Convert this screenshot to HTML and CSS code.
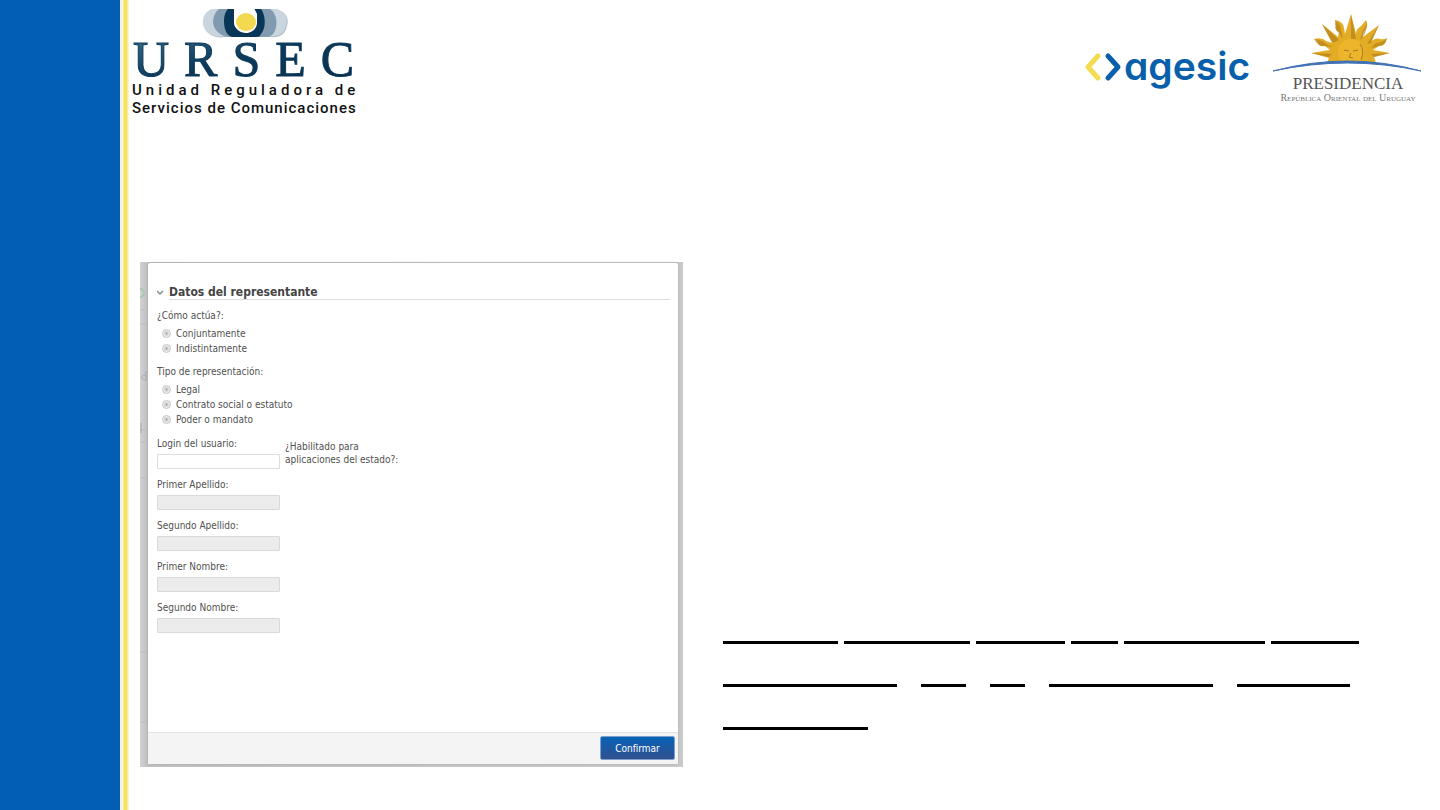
FILE: index.html
```html
<!DOCTYPE html>
<html lang="es">
<head>
<meta charset="utf-8">
<title>URSEC - Datos del representante</title>
<link rel="stylesheet" href="styles.css">
</head>
<body>
<div class="page">
  <div class="stripe"></div>
  <main class="main">
    <header class="header">
      <svg class="logo-ursec" viewBox="0 0 240 112" role="img" aria-label="URSEC">
        <defs>
          <linearGradient id="navy" x1="0" y1="0" x2="1" y2="1">
            <stop offset="0" stop-color="#3f7390"/>
            <stop offset=".45" stop-color="#0c3a5b"/>
            <stop offset="1" stop-color="#0b2b49"/>
          </linearGradient>
        </defs>
        <path d="M80 1H145C154 4 156 10 154 17C152 25 148 29 137 28H92C82 30 72 25 71 16C70 9 74 3 80 1Z" fill="#b4bec6" transform="translate(1 1)"/>
        <path d="M80 1H145C154 4 156 10 154 17C152 25 148 29 137 28H92C82 30 72 25 71 16C70 9 74 3 80 1Z" fill="#c9d6df"/>
        <path d="M87 1H138C146 6 146 20 141 26C138 29 134 29 131 29H97C88 28 82 22 81 15C81 9 83 4 87 1Z" fill="#809bb0"/>
        <path d="M96 1H129C134 8 134 20 129 26C128 28 127 29 124 29H100C94 27 92 20 92 13C92 7 94 3 96 1Z" fill="#093556"/>
        <path d="M102 0H122L125 6V15C125 20 120 25 114 25S102 20 102 15Z" fill="#fff"/>
        <ellipse cx="114" cy="14" rx="10" ry="9" fill="#f3d94f"/>
        <text class="ursec-name" x="1" y="68" fill="url(#navy)">URSEC</text>
        <text class="ursec-line wide" x="0" y="87">Unidad Reguladora de</text>
        <text class="ursec-line" x="0" y="105">Servicios de Comunicaciones</text>
      </svg>
      <div class="partners">
        <svg class="logo-agesic" viewBox="0 0 168 52" role="img" aria-label="agesic">
          <path d="M14 13L4 24L14 35" fill="none" stroke="#f3dc50" stroke-width="5" stroke-linecap="round" stroke-linejoin="round"/>
          <path d="M24 13L34 24L24 35" fill="none" stroke="#0860ab" stroke-width="5" stroke-linecap="round" stroke-linejoin="round"/>
          <text class="agesic-name" x="40" y="37">agesic</text>
        </svg>
        <svg class="logo-pres" viewBox="0 0 152 94" role="img" aria-label="Presidencia República Oriental del Uruguay">
          <path d="M55 51L57 46L39 41L58 38L53 34Q47 35 46 31Q45 28 42 27Q50 25 54 29L60 31L50 12L66 25L67 20Q62 18 64 14Q65 11 63 8Q71 9 72 16L73 22L79 2L84 22Q84 17 88 15Q91 12 94 8Q97 15 93 18Q90 21 91 25L107 13L99 30Q103 25 108 27Q112 28 115 26Q113 35 107 34L101 38L118 41L102 45L104 51Z" fill="#e3ac25"/>
          <path d="M39 41L60 42L57 45ZM42 27Q50 28 56 33L61 35L53 34Q46 35 42 27ZM50 12L67 28L61 31ZM63 8Q69 12 69 18L71 27L67 21Q62 17 63 8ZM79 2V27H84ZM94 8Q95 14 91 18L88 28L91 25Q96 18 94 8ZM107 13L95 32L99 31ZM115 26Q110 31 104 31L99 36L107 34Q113 34 115 26ZM118 41L99 42L102 45Z" fill="#a8761d" opacity=".55"/>
          <circle cx="79" cy="40" r="13" fill="#edb52b"/>
          <path d="M72 38L77 39M81 39L86 38M79 41L77 45L81 46M75 49Q79 51 83 49M88 32Q93 39 89 48" fill="none" stroke="#a87721" stroke-width="1"/>
          <path d="M52 52Q76 47 106 52L106 56H52Z" fill="#fff"/>
          <path d="M1 59Q76 39 149 59Q76 43 1 59Z" fill="#3e70b5" stroke="#3e70b5" stroke-width="1"/>
          <text class="pres-name" x="76" y="77">PRESIDENCIA</text>
          <text class="pres-sub" x="76" y="89">República Oriental del Uruguay</text>
        </svg>
      </div>
    </header>

    <div class="content">
      <section class="backdrop">
        <svg class="ghost" viewBox="0 0 8 505" aria-hidden="true">
          <circle cx="0" cy="31" r="4" fill="none" stroke="#a5c9b2" stroke-width="2"/>
          <path d="M0 48H4M0 62H7M0 168H8M0 180H7M0 216H8M0 390H8M0 460H8" stroke="#bdbdbd"/>
          <path d="M6 109V119M6 114C1 111 0 119 6 118M1 161V171" fill="none" stroke="#aaa"/>
        </svg>
        <form class="dialog">
          <div class="dialog-body">
            <div class="section-head">
              <svg class="chevron" viewBox="0 0 8 6" aria-hidden="true"><path d="M0 1L3 4L6 1" fill="none" stroke="#888" stroke-width="1.5"/></svg>
              <h1 class="section-title">Datos del representante</h1>
            </div>
            <fieldset class="group">
              <legend class="label">¿Cómo actúa?:</legend>
              <label class="option"><input class="radio" type="radio" name="actua">Conjuntamente</label>
              <label class="option"><input class="radio" type="radio" name="actua">Indistintamente</label>
            </fieldset>
            <fieldset class="group">
              <legend class="label">Tipo de representación:</legend>
              <label class="option"><input class="radio" type="radio" name="tipo">Legal</label>
              <label class="option"><input class="radio" type="radio" name="tipo">Contrato social o estatuto</label>
              <label class="option"><input class="radio" type="radio" name="tipo">Poder o mandato</label>
            </fieldset>
            <div class="login-row">
              <div class="field"><label class="label" for="login">Login del usuario:</label><input class="input" id="login" type="text"></div>
              <p class="enabled">¿Habilitado para aplicaciones del estado?:</p>
            </div>
            <div class="field"><label class="label" for="ape1">Primer Apellido:</label><input class="input" id="ape1" type="text" disabled></div>
            <div class="field"><label class="label" for="ape2">Segundo Apellido:</label><input class="input" id="ape2" type="text" disabled></div>
            <div class="field"><label class="label" for="nom1">Primer Nombre:</label><input class="input" id="nom1" type="text" disabled></div>
            <div class="field"><label class="label" for="nom2">Segundo Nombre:</label><input class="input" id="nom2" type="text" disabled></div>
          </div>
          <div class="dialog-foot"><button class="confirm" type="button">Confirmar</button></div>
        </form>
      </section>

      <section class="rules">
        <div class="rule-row">
          <span class="rule" style="width:115px"></span><span class="rule" style="width:126px"></span><span class="rule" style="width:89px"></span><span class="rule" style="width:47px"></span><span class="rule" style="width:141px"></span><span class="rule" style="width:88px"></span>
        </div>
        <div class="rule-row loose">
          <span class="rule" style="width:174px"></span><span class="rule" style="width:45px"></span><span class="rule" style="width:35px"></span><span class="rule" style="width:164px"></span><span class="rule" style="width:113px"></span>
        </div>
        <div class="rule-row">
          <span class="rule" style="width:145px"></span>
        </div>
      </section>
    </div>
  </main>
</div>
</body>
</html>
```
FILE: styles.css
```css
* { box-sizing: border-box; }

body {
  margin: 0;
  background: #fff;
  color: #505050;
  font: 10px/15px "DejaVu Sans Condensed", "DejaVu Sans", sans-serif;
}

.page { display: flex; min-height: 100vh; }

.stripe {
  flex: none;
  width: 129px;
  background: linear-gradient(to right, #025db5 120px, #f2f2e4 120px, #f8f6dc 123px, #f6e35f 124px, #f6e35f 127px, #fbf5c8 128px);
}

.main { flex: 1; min-width: 0; }

.header {
  display: flex;
  justify-content: space-between;
  align-items: flex-start;
  padding: 8px 16px 142px 3px;
}

.logo-ursec { width: 240px; height: 112px; }
.ursec-name { font: 50px "Liberation Serif", serif; letter-spacing: 15px; stroke: #0c3a5b; stroke-width: 1px; }
.ursec-line { font: 500 15px Roboto, sans-serif; letter-spacing: 1px; fill: #111; }
.ursec-line.wide { letter-spacing: 4px; }

.partners { display: flex; align-items: center; gap: 20px; padding-top: 4px; }
.logo-agesic { width: 168px; height: 52px; margin-top: 20px; overflow: visible; }
.agesic-name { font: 600 39px Inter, sans-serif; font-feature-settings: "cv11"; fill: #0860ab; }
.logo-pres { width: 152px; height: 94px; }
.pres-name { font: 17px "Liberation Serif", serif; fill: #555; text-anchor: middle; }
.pres-sub { font: 10px "Liberation Serif", serif; font-variant: small-caps; fill: #777; text-anchor: middle; }

.content {
  display: grid;
  grid-template-columns: minmax(0, 543fr) minmax(0, 677fr);
  gap: 40px;
  padding: 0 40px 40px 11px;
}

.backdrop {
  position: relative;
  display: flex;
  min-height: 505px;
  padding: 1px 5px 3px 8px;
  background: linear-gradient(to right, #d2d2d2, #bebebe 8px, #c9c9c9);
}

.ghost { position: absolute; left: 0; top: 0; width: 8px; height: 505px; }

.dialog {
  position: relative;
  display: flex;
  flex-direction: column;
  flex: 1;
  background: #fff;
  border-radius: 2px;
  box-shadow: 0 0 2px #999;
}

.dialog-body { flex: 1; display: flex; flex-direction: column; gap: 8px; padding: 22px 8px 8px 9px; }

.section-head { display: flex; align-items: center; gap: 4px; }
.chevron { width: 8px; height: 6px; }
.section-title {
  flex: 1;
  margin: 0;
  border-bottom: 1px solid #ddd;
  color: #444;
  font: bold 12px/14px "DejaVu Sans Condensed", "DejaVu Sans", sans-serif;
}

.group { margin: 0; padding: 0; border: 0; }
.label { display: block; padding: 0; margin-bottom: 3px; }
.option { display: flex; align-items: center; gap: 5px; padding-left: 5px; }

.radio {
  appearance: none;
  width: 9px;
  height: 9px;
  margin: 0;
  border: 1px solid #c4c4c4;
  border-radius: 50%;
  background: radial-gradient(#aaa, #eee 60%);
}

.login-row { display: flex; gap: 5px; padding-top: 1px; }
.field { width: 123px; }

.input {
  display: block;
  width: 100%;
  height: 15px;
  padding: 0 4px;
  border: 1px solid #ddd;
  border-radius: 1px;
  background: #fff;
  font: inherit;
}
.input:disabled { background: #ececec; border-color: #d9d9d9; }

.enabled { width: 120px; margin: 4px 0 0; line-height: 13px; }

.dialog-foot {
  display: flex;
  justify-content: flex-end;
  padding: 3px 3px 4px;
  border-top: 1px solid #e2e2e2;
  background: #f4f4f4;
}

.confirm {
  width: 75px;
  height: 24px;
  padding: 0;
  border: 1px solid #7f9fce;
  border-radius: 2px;
  background: linear-gradient(#0862b5, #30508f);
  color: #fff;
  font: inherit;
}

.rules { display: flex; flex-direction: column; gap: 40px; padding-top: 379px; }
.rule-row { display: flex; gap: 6px; }
.rule-row.loose { gap: 24px; }
.rule { height: 3px; background: #000; }
```
